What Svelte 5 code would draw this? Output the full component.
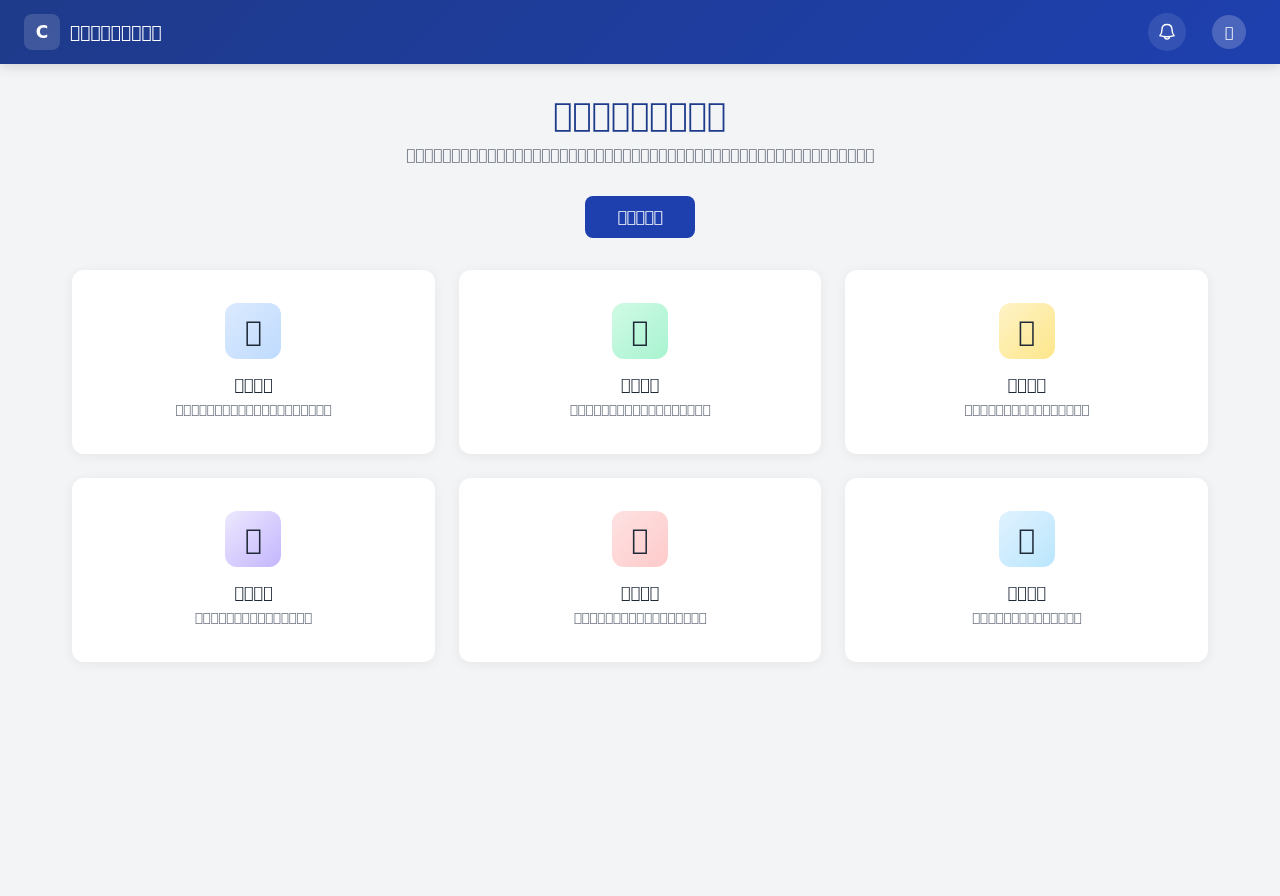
<script lang="ts">
  // Every label is set in a script that has no installed glyphs.
  const glyphs = (count: number) => '\uE000'.repeat(count);

  type Feature = { tone: string; title: string; text: string };

  const features: Feature[] = [
    { tone: 'blue', title: glyphs(4), text: glyphs(20) },
    { tone: 'green', title: glyphs(4), text: glyphs(18) },
    { tone: 'yellow', title: glyphs(4), text: glyphs(16) },
    { tone: 'purple', title: glyphs(4), text: glyphs(15) },
    { tone: 'red', title: glyphs(4), text: glyphs(17) },
    { tone: 'sky', title: glyphs(4), text: glyphs(14) },
  ];
</script>

<div class="page">
  <header class="topbar">
    <a class="brand" href="/">
      <span class="logo">C</span>
      <span class="name">{glyphs(9)}</span>
    </a>
    <div class="actions">
      <button class="bell" type="button">
        <svg viewBox="0 0 18 18" width="18" height="18" fill="none" stroke="currentColor" stroke-width="1.4" stroke-linecap="round" stroke-linejoin="round">
          <path d="M9 1.500c-3.200 0-5 2.200-5 5 0 3.200-.6 4.700-2.200 6.200 2 .7 4.500 1 7.200 1s5.200-.3 7.200-1c-1.600-1.500-2.200-3-2.200-6.200 0-2.800-1.800-5-5-5z" />
          <path d="M6.400 13.700c.2 1.500 1.200 2.400 2.600 2.400s2.400-.9 2.600-2.400" />
        </svg>
      </button>
      <button class="user" type="button">
        <span class="avatar">{glyphs(1)}</span>
      </button>
    </div>
  </header>

  <main>
    <section class="hero">
      <h1>{glyphs(9)}</h1>
      <p>{glyphs(52)}</p>
      <button class="start" type="button">{glyphs(5)}</button>
    </section>

    <section class="grid">
      {#each features as feature}
        <article class="card">
          <div class="icon {feature.tone}">{glyphs(1)}</div>
          <h2>{feature.title}</h2>
          <p>{feature.text}</p>
        </article>
      {/each}
    </section>
  </main>
</div>

<style>
  :global(body) { margin: 0; background: #f3f4f6; }

  /* own transparent layer, so text gets greyscale smoothing */
  .page {
    min-height: 100vh; color: #1f2937;
    font-family: 'DejaVu Sans', sans-serif;
    will-change: transform;
  }
  h1, h2, p { margin: 0; }
  button { font-family: inherit; cursor: pointer; border: 0; }

  .topbar {
    display: flex; align-items: center; justify-content: space-between;
    height: 64px; padding: 0 24px; color: #fff;
    background: linear-gradient(135deg, #1e3a8a 0%, #1e40af 100%);
    box-shadow: 0 2px 12px rgba(0, 0, 0, 0.15);
  }
  .brand { display: flex; align-items: center; gap: 10px; color: inherit; text-decoration: none; font-size: 17px; }
  .logo {
    display: grid; place-items: center; width: 36px; height: 36px;
    border-radius: 8px; background: rgba(255, 255, 255, 0.15);
    font-weight: 700;
  }
  .name { font-weight: 600; }

  .actions { display: flex; align-items: center; gap: 16px; }
  .bell {
    display: grid; place-items: center; width: 38px; height: 38px; padding: 0;
    border-radius: 50%; background: rgba(255, 255, 255, 0.1); color: #fff;
  }
  .user { padding: 4px 10px; background: none; color: #fff; }
  .avatar {
    display: grid; place-items: center; width: 34px; height: 34px;
    border-radius: 50%; background: rgba(255, 255, 255, 0.2);
    font-size: 14px; font-weight: 600;
  }

  main { max-width: 1136px; margin: 0 auto; padding: 32px; }

  .hero { margin-bottom: 32px; text-align: center; }
  .hero h1 { margin-bottom: 12px; color: #1e3a8a; font-size: 32px; line-height: 38px; font-weight: 700; }
  .hero p { margin-bottom: 32px; color: #6b7280; font-size: 15px; line-height: 18px; }
  .start {
    padding: 12px 32px; border-radius: 8px; background: #1e40af; color: #fff;
    font-size: 15px; line-height: 18px; font-weight: 600;
  }
  .start:hover { background: #1e3a8a; }

  .grid { display: grid; grid-template-columns: repeat(3, 1fr); gap: 24px; }
  .card {
    display: flex; flex-direction: column; align-items: center;
    padding: 33px 25px 35px; border-radius: 12px; background: #fff; text-align: center;
    box-shadow: 0 2px 12px rgba(0, 0, 0, 0.06);
  }
  .icon {
    display: grid; place-items: center; width: 56px; height: 56px;
    margin-bottom: 16px; border-radius: 12px; font-size: 28px;
  }
  .card h2 { margin-bottom: 6px; font-size: 16px; line-height: 20px; font-weight: 600; }
  .card p { color: #6b7280; font-size: 13px; line-height: 18px; }

  .blue { background: linear-gradient(135deg, #dbeafe, #bfdbfe); }
  .green { background: linear-gradient(135deg, #d1fae5, #a7f3d0); }
  .yellow { background: linear-gradient(135deg, #fef3c7, #fde68a); }
  .purple { background: linear-gradient(135deg, #ede9fe, #c4b5fd); }
  .red { background: linear-gradient(135deg, #fee2e2, #fecaca); }
  .sky { background: linear-gradient(135deg, #e0f2fe, #bae6fd); }

  @media (max-width: 800px) {
    .grid { grid-template-columns: 1fr; }
    .hero p { overflow-wrap: anywhere; }
  }
</style>
